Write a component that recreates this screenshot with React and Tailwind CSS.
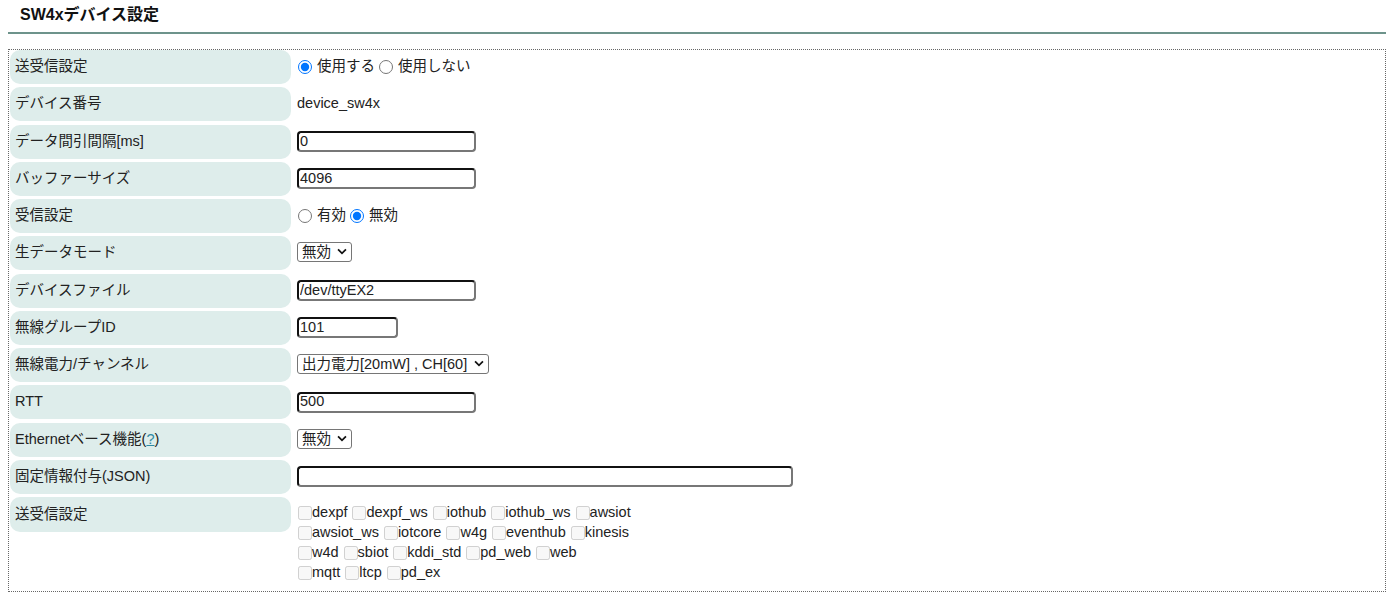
import React from 'react';

const rows = [
  { label: '送受信設定', kind: 'radio', opts: ['使用する', '使用しない'], checked: 0 },
  { label: 'デバイス番号', kind: 'text', value: 'device_sw4x' },
  { label: 'データ間引間隔[ms]', kind: 'input', value: '0', w: 'w-[179px]' },
  { label: 'バッファーサイズ', kind: 'input', value: '4096', w: 'w-[179px]' },
  { label: '受信設定', kind: 'radio', opts: ['有効', '無効'], checked: 1 },
  { label: '生データモード', kind: 'select', value: '無効' },
  { label: 'デバイスファイル', kind: 'input', value: '/dev/ttyEX2', w: 'w-[179px]' },
  { label: '無線グループID', kind: 'input', value: '101', w: 'w-[101px]' },
  { label: '無線電力/チャンネル', kind: 'select', value: '出力電力[20mW] , CH[60]' },
  { label: 'RTT', kind: 'input', value: '500', w: 'w-[179px]' },
  { label: 'Ethernetベース機能', kind: 'select', value: '無効', help: true },
  { label: '固定情報付与(JSON)', kind: 'input', value: '', w: 'w-[496px]' },
];

const targets = [
  ['dexpf', 'dexpf_ws', 'iothub', 'iothub_ws', 'awsiot'],
  ['awsiot_ws', 'iotcore', 'w4g', 'eventhub', 'kinesis'],
  ['w4d', 'sbiot', 'kddi_std', 'pd_web', 'web'],
  ['mqtt', 'ltcp', 'pd_ex'],
];

function Value({ row, idx }) {
  if (row.kind === 'radio') {
    return (
      <div className="flex items-center">
        {row.opts.map((o, i) => (
          <label key={o} className="flex items-center mr-[3px]">
            <input type="radio" name={'r' + idx} defaultChecked={i === row.checked} className="w-[14px] h-[14px] m-0 ml-[1px] mr-[5px]" />
            <span>{o}</span>
          </label>
        ))}
      </div>
    );
  }
  if (row.kind === 'text') return <span>{row.value}</span>;
  if (row.kind === 'input') {
    return (
      <input
        type="text"
        defaultValue={row.value}
        className={`${row.w} h-[21px] px-[1px] text-[14.5px] bg-white rounded-[4px] border-2 border-t-[#111] border-l-[#111] border-b-[#777] border-r-[#777] outline-none`}
      />
    );
  }
  return (
    <div className="relative">
      <select defaultValue={row.value} className="appearance-none h-[20px] text-[14.5px] leading-[18px] border border-[#767676] rounded-[3px] bg-white pl-[4px] pr-[20px]">
        <option>{row.value}</option>
      </select>
      <svg className="absolute right-[5px] top-[6px] w-[10px] h-[7px] pointer-events-none" viewBox="0 0 11 8" fill="none" stroke="#111" strokeWidth="2">
        <path d="M1 1.5 L5.5 6 L10 1.5" />
      </svg>
    </div>
  );
}

export default function App() {
  return (
    <div className="px-2 text-[14.5px] text-[#222]" style={{ fontFamily: '"Liberation Sans", "Noto Sans CJK JP", sans-serif' }}>
      <div className="h-[34px] pt-[3px] pl-3 border-b-2 border-[#6d938b] font-bold text-[16px] text-[#111]">SW4xデバイス設定</div>
      <div className="mt-[15px] border border-dotted border-[#666] px-[1px] pt-[0px] pb-[8px] flex flex-col gap-[3.25px]">
        {rows.map((row, idx) => (
          <div key={idx} className="flex items-center h-[34px]">
            <div className="w-[281px] h-full shrink-0 rounded-[10px] bg-[#deedeb] flex items-center pl-[5px]">
              {row.label}
              {row.help && (
                <span>(<span className="text-[#2f8aa3] underline">?</span>)</span>
              )}
            </div>
            <div className="pl-[6px] flex items-center">
              <Value row={row} idx={idx} />
            </div>
          </div>
        ))}
        <div className="flex items-start">
          <div className="w-[281px] h-[35px] shrink-0 rounded-[10px] bg-[#deedeb] flex items-center pl-[5px]">送受信設定</div>
          <div className="pl-[6px] pt-[6px]">
            {targets.map((line, i) => (
              <div key={i} className="flex items-center h-[20px]">
                {line.map((t) => (
                  <label key={t} className="flex items-center mr-[4px]">
                    <input type="checkbox" disabled className="w-[14px] h-[14px] m-0 ml-[1px]" />
                    <span>{t}</span>
                  </label>
                ))}
              </div>
            ))}
          </div>
        </div>
      </div>
    </div>
  );
}
